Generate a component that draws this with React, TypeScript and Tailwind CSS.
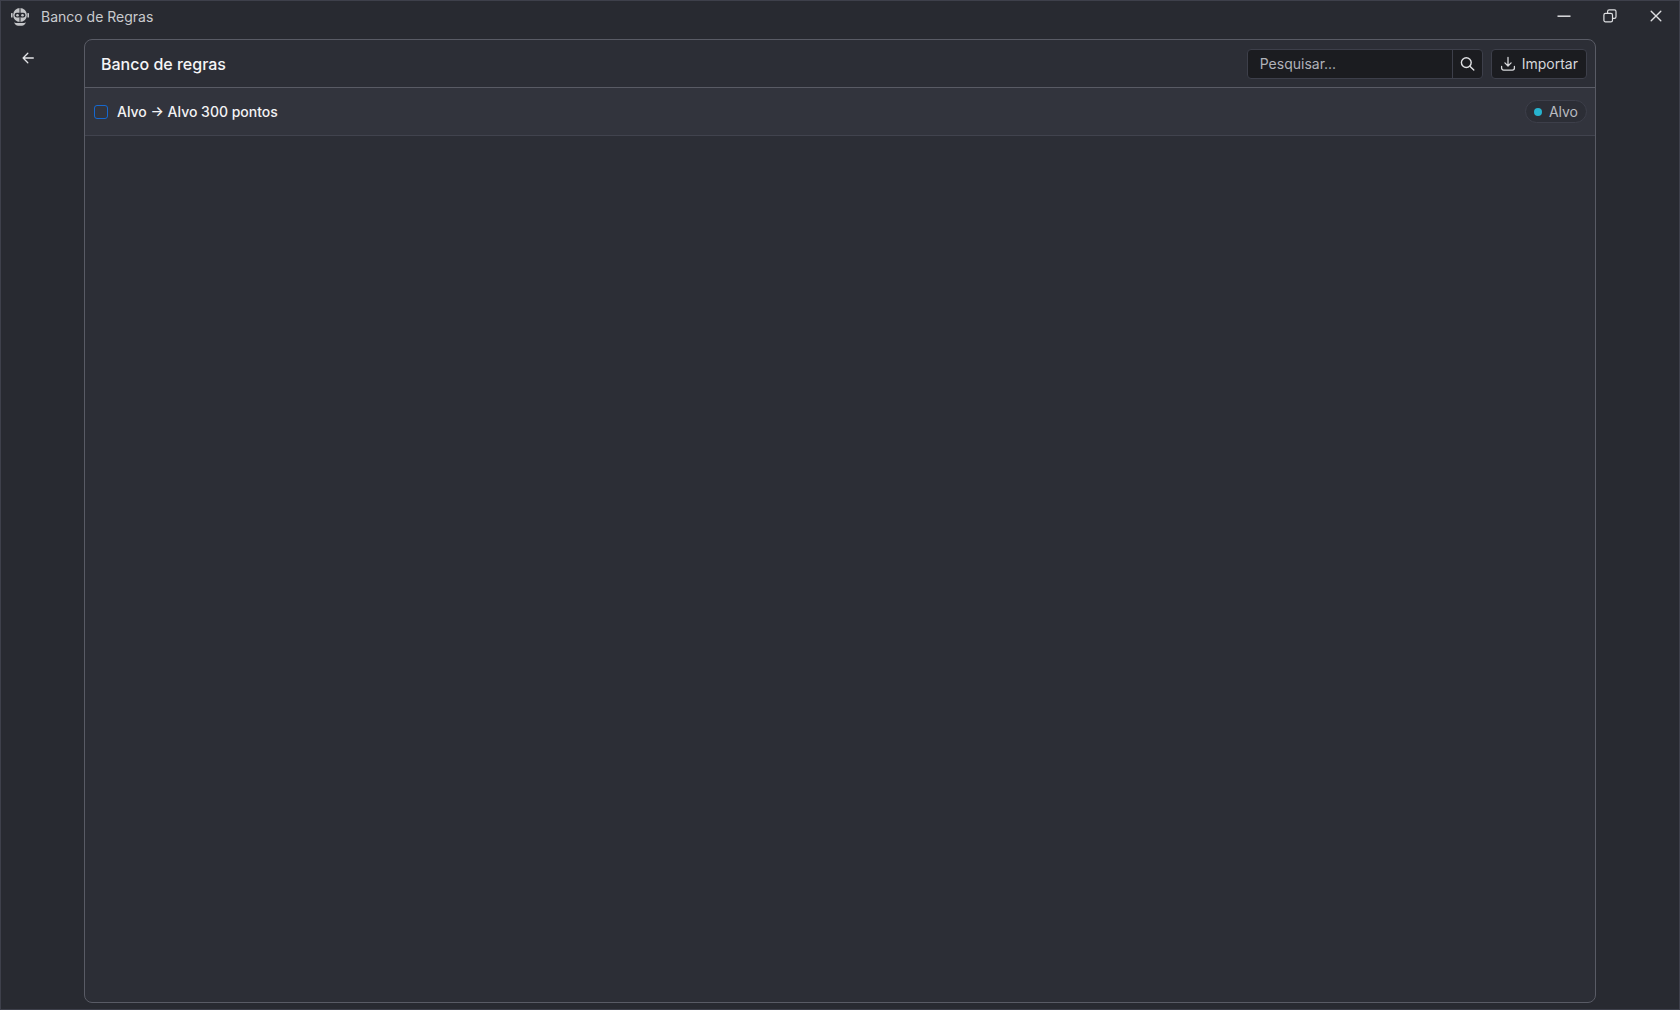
import { useState } from "react";

type Rule = {
  id: number;
  name: string;
  tag: string;
};

const rules: Rule[] = [{ id: 1, name: "Alvo → Alvo 300 pontos", tag: "Alvo" }];

const RobotLogo = () => (
  <svg width="18" height="18" viewBox="0 0 18 18" fill="#c4c5c8">
    <rect x="0" y="5" width="1.6" height="4.600" rx="0.600" />
    <rect x="16.400" y="5" width="1.6" height="4.600" rx="0.600" />
    <circle cx="9" cy="7" r="6.900" />
    <rect x="8.500" y="0" width="1" height="5" fill="#282a31" />
    <rect x="8.500" y="9.500" width="1" height="4.500" fill="#282a31" />
    <rect x="3.600" y="4.800" width="10.800" height="4.800" rx="2" fill="#282a31" />
    <circle cx="6.500" cy="7.200" r="1.300" />
    <circle cx="11.500" cy="7.200" r="1.300" />
    <path d="M3.200 14.300c1 .6 2 .8 3 .8h5.600c1 0 2-.2 3-.8-.5 2.100-2.100 3.500-4 3.500H7.200c-1.900 0-3.500-1.400-4-3.500z" />
  </svg>
);

const TitleBar = () => (
  <header className="flex h-8 shrink-0 items-center pl-2.5">
    <RobotLogo />
    <span className="ml-3 flex-1 text-sm text-[#c9cace]">Banco de Regras</span>
    <div className="flex h-[30px] self-start text-[#dedfe2]">
      <button aria-label="Minimizar" className="flex w-[46px] items-center justify-center">
        <svg width="14" height="14" viewBox="0 0 14 14" fill="none" stroke="currentColor" strokeWidth="1.5">
          <path d="M0.500 7.200h13" />
        </svg>
      </button>
      <button aria-label="Restaurar" className="flex w-[46px] items-center justify-center">
        <svg width="14" height="14" viewBox="0 0 14 14" fill="none" stroke="currentColor" strokeWidth="1.2">
          <rect x="0.900" y="4.300" width="8.600" height="8.600" rx="1.600" />
          <path d="M4.600 4V2.500A1.600 1.600 0 0 1 6.200 0.900h5.200A1.600 1.600 0 0 1 13 2.500v5.200a1.600 1.600 0 0 1-1.600 1.600H9.800" />
        </svg>
      </button>
      <button aria-label="Fechar" className="flex w-[46px] items-center justify-center">
        <svg width="14" height="14" viewBox="0 0 14 14" fill="none" stroke="currentColor" strokeWidth="1.4" strokeLinecap="round">
          <path d="M2.200 2.200l9.600 9.600M11.800 2.200l-9.600 9.600" />
        </svg>
      </button>
    </div>
  </header>
);

const SearchBox = ({ value, onChange }: { value: string; onChange: (v: string) => void }) => (
  <div className="flex h-[30px] w-[236px] overflow-hidden rounded border border-[#3d3f4a] bg-[#1b1c20]">
    <input
      type="text"
      aria-label="Pesquisar"
      placeholder="Pesquisar..."
      value={value}
      onChange={(e) => onChange(e.target.value)}
      className="min-w-0 flex-1 bg-transparent px-3 text-sm text-[#e4e5e8] outline-none placeholder:text-[#b0b2b9]"
    />
    <button
      aria-label="Buscar"
      className="flex w-[30px] items-center justify-center border-l border-[#3d3f4a] text-[#dedfe2]"
    >
      <svg width="16" height="16" viewBox="0 0 16 16" fill="none" stroke="currentColor" strokeWidth="1.400" strokeLinecap="round">
        <circle cx="7.300" cy="6.600" r="4.900" />
        <path d="M10.900 10.200l3.900 3.900" />
      </svg>
    </button>
  </div>
);

const RuleRow = ({ rule }: { rule: Rule }) => (
  <li className="flex h-12 items-center border-b border-[#41434e] bg-[#32343d] pr-2 pl-[9px]">
    <label className="flex flex-1 items-center gap-[9px] text-sm font-medium text-[#f2f2f4]">
      <input
        type="checkbox"
        className="size-3.5 appearance-none rounded-[3px] border border-[#1668cf] checked:bg-[#1668cf]"
      />
      {rule.name}
    </label>
    <span className="flex h-[23px] items-center gap-[7px] rounded-full border border-[#3d3f4a] bg-[#2c2e36] px-2 text-sm text-[#b9bbc1]">
      <span className="size-2 rounded-full bg-[#27b3cf]" />
      {rule.tag}
    </span>
  </li>
);

const App = () => {
  const [search, setSearch] = useState("");

  const visible = rules.filter((r) =>
    r.name.toLowerCase().includes(search.toLowerCase()),
  );

  return (
    <div className="flex min-h-screen flex-col border border-[#3e404b] bg-[#282a31] font-['Inter',sans-serif]">
      <TitleBar />

      <div className="flex flex-1 py-1.5">
        <aside className="flex w-[83px] shrink-0 items-start pt-[7px] pl-[15px]">
          <button aria-label="Voltar" className="flex size-6 items-center justify-center text-[#e2e3e6]">
            <svg width="14" height="14" viewBox="0 0 14 14" fill="none" stroke="currentColor" strokeWidth="1.300" strokeLinecap="round" strokeLinejoin="round">
              <path d="M12.300 7H2.100M6.800 2.300L2.100 7l4.700 4.700" />
            </svg>
          </button>
        </aside>

        <main className="mr-[83px] flex flex-1 flex-col overflow-hidden rounded-lg border border-[#595b65] bg-[#2c2e36]">
          <div className="flex h-12 items-center gap-2 border-b border-[#595b65] pr-2 pl-4">
            <h1 className="flex-1 text-base font-medium text-[#f5f5f7]">
              Banco de regras
            </h1>
            <SearchBox value={search} onChange={setSearch} />
            <button className="flex h-[30px] items-center gap-1.5 rounded border border-[#3d3f4a] bg-[#1b1c20] px-2 text-sm text-[#d6d7da]">
              <svg width="16" height="16" viewBox="0 0 16 16" fill="none" stroke="currentColor" strokeWidth="1.300" strokeLinecap="round" strokeLinejoin="round">
                <path d="M8 1.500v8.300M4.900 6.900L8 10l3.100-3.100" />
                <path d="M1.600 10.500v1.600a2 2 0 0 0 2 2h8.800a2 2 0 0 0 2-2v-1.600" />
              </svg>
              Importar
            </button>
          </div>

          <ul>
            {visible.map((rule) => (
              <RuleRow key={rule.id} rule={rule} />
            ))}
          </ul>
        </main>
      </div>
    </div>
  );
};

export default App;
